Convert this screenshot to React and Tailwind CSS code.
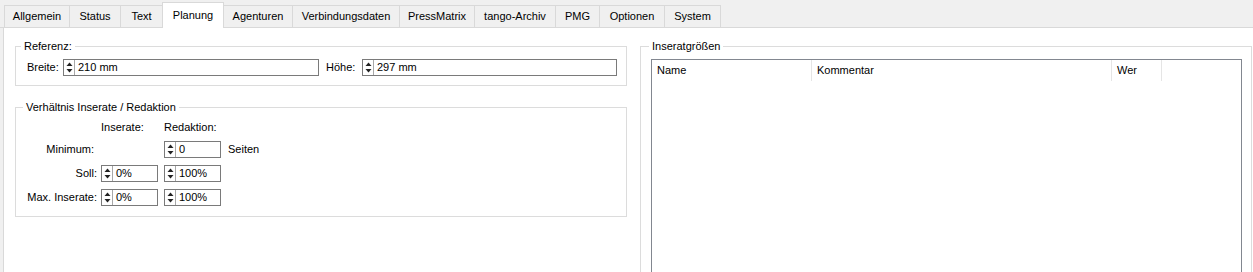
import React from 'react'

const tabs = [
  { label: 'Allgemein', w: 'w-[66px]' },
  { label: 'Status', w: 'w-[52px]' },
  { label: 'Text', w: 'w-[43px]' },
  { label: 'Planung', w: 'w-[62px]', active: true },
  { label: 'Agenturen', w: 'w-[70px]' },
  { label: 'Verbindungsdaten', w: 'w-[108px]' },
  { label: 'PressMatrix', w: 'w-[76px]' },
  { label: 'tango-Archiv', w: 'w-[82px]' },
  { label: 'PMG', w: 'w-[45px]' },
  { label: 'Optionen', w: 'w-[66px]' },
  { label: 'System', w: 'w-[57px]' },
]

const SpinArrows = () => (
  <div className="w-[11px] h-full border-r border-[#a8a8a8] flex items-center justify-center">
    <svg width="7" height="13" viewBox="0 0 7 13">
      <path d="M3.5 1.5 L6.5 5 L0.5 5 Z" fill="#222" />
      <path d="M0.5 8 L6.5 8 L3.5 11.5 Z" fill="#222" />
    </svg>
  </div>
)

const Spin = ({ value, className = '' }) => (
  <div className={`flex items-center h-[17px] border border-[#7a7a7a] bg-white ${className}`}>
    <SpinArrows />
    <span className="pl-[3px] leading-none">{value}</span>
  </div>
)

const Tab = ({ label, w, active }) => (
  <div
    className={
      active
        ? `${w} h-[26px] -mb-px -ml-px bg-white border border-b-0 border-[#d9d9d9] flex items-center justify-center`
        : `${w} h-[22px] -ml-px bg-[#f0f0f0] border border-b-0 border-[#d9d9d9] flex items-center justify-center`
    }
  >
    {label}
  </div>
)

export default function App() {
  return (
    <div className="w-[1253px] h-[272px] overflow-hidden bg-[#f0f0f0] text-black text-[11px] font-['Liberation_Sans',Arial,sans-serif]">
      {/* tab strip */}
      <div className="h-[28px] flex items-end pl-[5px] border-b border-[#d9d9d9]">
        {tabs.map((t) => (
          <Tab key={t.label} {...t} />
        ))}
      </div>

      {/* tab page */}
      <div className="ml-[3px] h-[244px] bg-white border-l border-[#d9d9d9] flex pl-[11px]">
        <div className="w-[612px]">
          <fieldset className="mt-[11px] border border-[#dcdcdc] pb-[9px]">
            <legend className="ml-[5px] px-[3px] leading-[14px]">Referenz:</legend>
            <div className="flex items-center pt-[6px] pl-[11px]">
              <span className="w-[36px]">Breite:</span>
              <Spin value="210 mm" className="w-[256px]" />
              <span className="ml-[7px] w-[36px]">Höhe:</span>
              <Spin value="297 mm" className="w-[255px]" />
            </div>
          </fieldset>

          <fieldset className="mt-[14px] border border-[#dcdcdc] pb-[10px]">
            <legend className="ml-[7px] px-[3px] leading-[14px]">Verhältnis Inserate / Redaktion</legend>
            <div className="pl-[11px] pt-[6px]">
              <div className="flex h-[14px] items-center">
                <span className="w-[74px]" />
                <span className="w-[63px]">Inserate:</span>
                <span>Redaktion:</span>
              </div>
              <div className="flex items-center mt-[7px]">
                <span className="w-[70px] text-right pr-[3px]">Minimum:</span>
                <span className="ml-[4px] w-[57px]" />
                <Spin value="0" className="ml-[6px] w-[57px]" />
                <span className="ml-[7px]">Seiten</span>
              </div>
              <div className="flex items-center mt-[7px]">
                <span className="w-[70px] text-right">Soll:</span>
                <Spin value="0%" className="ml-[4px] w-[57px]" />
                <Spin value="100%" className="ml-[6px] w-[57px]" />
              </div>
              <div className="flex items-center mt-[7px]">
                <span className="w-[70px] text-right">Max. Inserate:</span>
                <Spin value="0%" className="ml-[4px] w-[57px]" />
                <Spin value="100%" className="ml-[6px] w-[57px]" />
              </div>
            </div>
          </fieldset>
        </div>

        <div className="ml-[13px] w-[612px]">
          <fieldset className="mt-[11px] border border-[#dcdcdc] h-[260px]">
            <legend className="ml-[8px] px-[3px] leading-[14px]">Inseratgrößen</legend>
            <div className="ml-[10px] mt-[6px] w-[591px] h-[220px] border border-[#828790] bg-white">
              <div className="flex h-[21px]">
                <div className="w-[160px] border-r border-[#e5e5e5] pl-[5px] flex items-center">Name</div>
                <div className="w-[300px] border-r border-[#e5e5e5] pl-[5px] flex items-center">Kommentar</div>
                <div className="w-[50px] border-r border-[#e5e5e5] pl-[5px] flex items-center">Wer</div>
              </div>
            </div>
          </fieldset>
        </div>
      </div>
    </div>
  )
}
